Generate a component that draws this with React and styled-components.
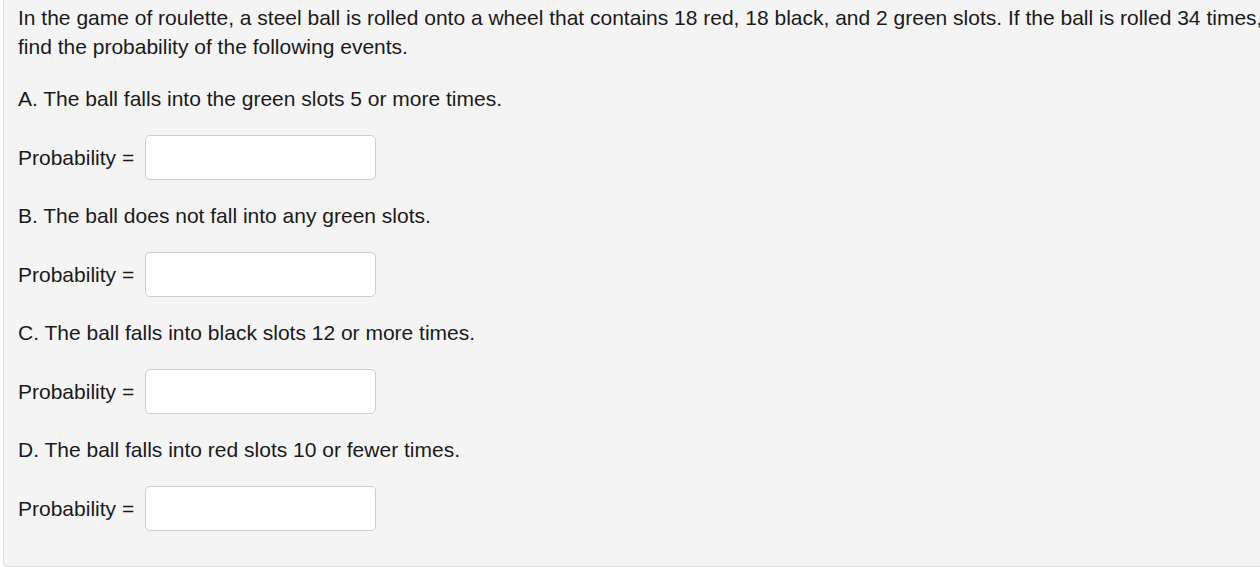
import React from "react";
import styled, { createGlobalStyle } from "styled-components";

const Global = createGlobalStyle`
  html, body { margin: 0; padding: 0; overflow: hidden; background: #fff; }
  body { font-family: "Liberation Sans", Arial, sans-serif; }
`;

const Panel = styled.div`
  margin-left: 3px;
  width: 1290px;
  box-sizing: border-box;
  padding: 3px 14px 35px 14px;
  background: #f4f4f4;
  border: 1px solid #dedede;
  border-top: none;
  border-radius: 0 0 4px 4px;
  color: #1a1a1a;
  font-size: 21px;
  line-height: 29px;
`;

const Intro = styled.p`
  margin: 0 0 23px 0;
`;

const Question = styled.p`
  margin: 0 0 21.5px 0;
`;

const AnswerRow = styled.div`
  display: flex;
  align-items: center;
  gap: 11px;
  margin-bottom: 21.5px;
  &:last-child { margin-bottom: 0; }
`;

const Label = styled.span`
  white-space: nowrap;
`;

const Input = styled.input`
  box-sizing: border-box;
  width: 231px;
  height: 45px;
  border: 1px solid #cccccc;
  border-radius: 5px;
  background: #fff;
  font: inherit;
  padding: 0 10px;
  outline: none;
`;

const parts = [
  "A. The ball falls into the green slots 5 or more times.",
  "B. The ball does not fall into any green slots.",
  "C. The ball falls into black slots 12 or more times.",
  "D. The ball falls into red slots 10 or fewer times.",
];

export default function App() {
  return (
    <>
      <Global />
      <Panel>
        <Intro>
          In the game of roulette, a steel ball is rolled onto a wheel that contains 18 red, 18 black, and 2 green slots. If the ball is rolled 34 times, find the probability of the following events.
        </Intro>
        {parts.map((q) => (
          <React.Fragment key={q}>
            <Question>{q}</Question>
            <AnswerRow>
              <Label>Probability =</Label>
              <Input type="text" />
            </AnswerRow>
          </React.Fragment>
        ))}
      </Panel>
    </>
  );
}
